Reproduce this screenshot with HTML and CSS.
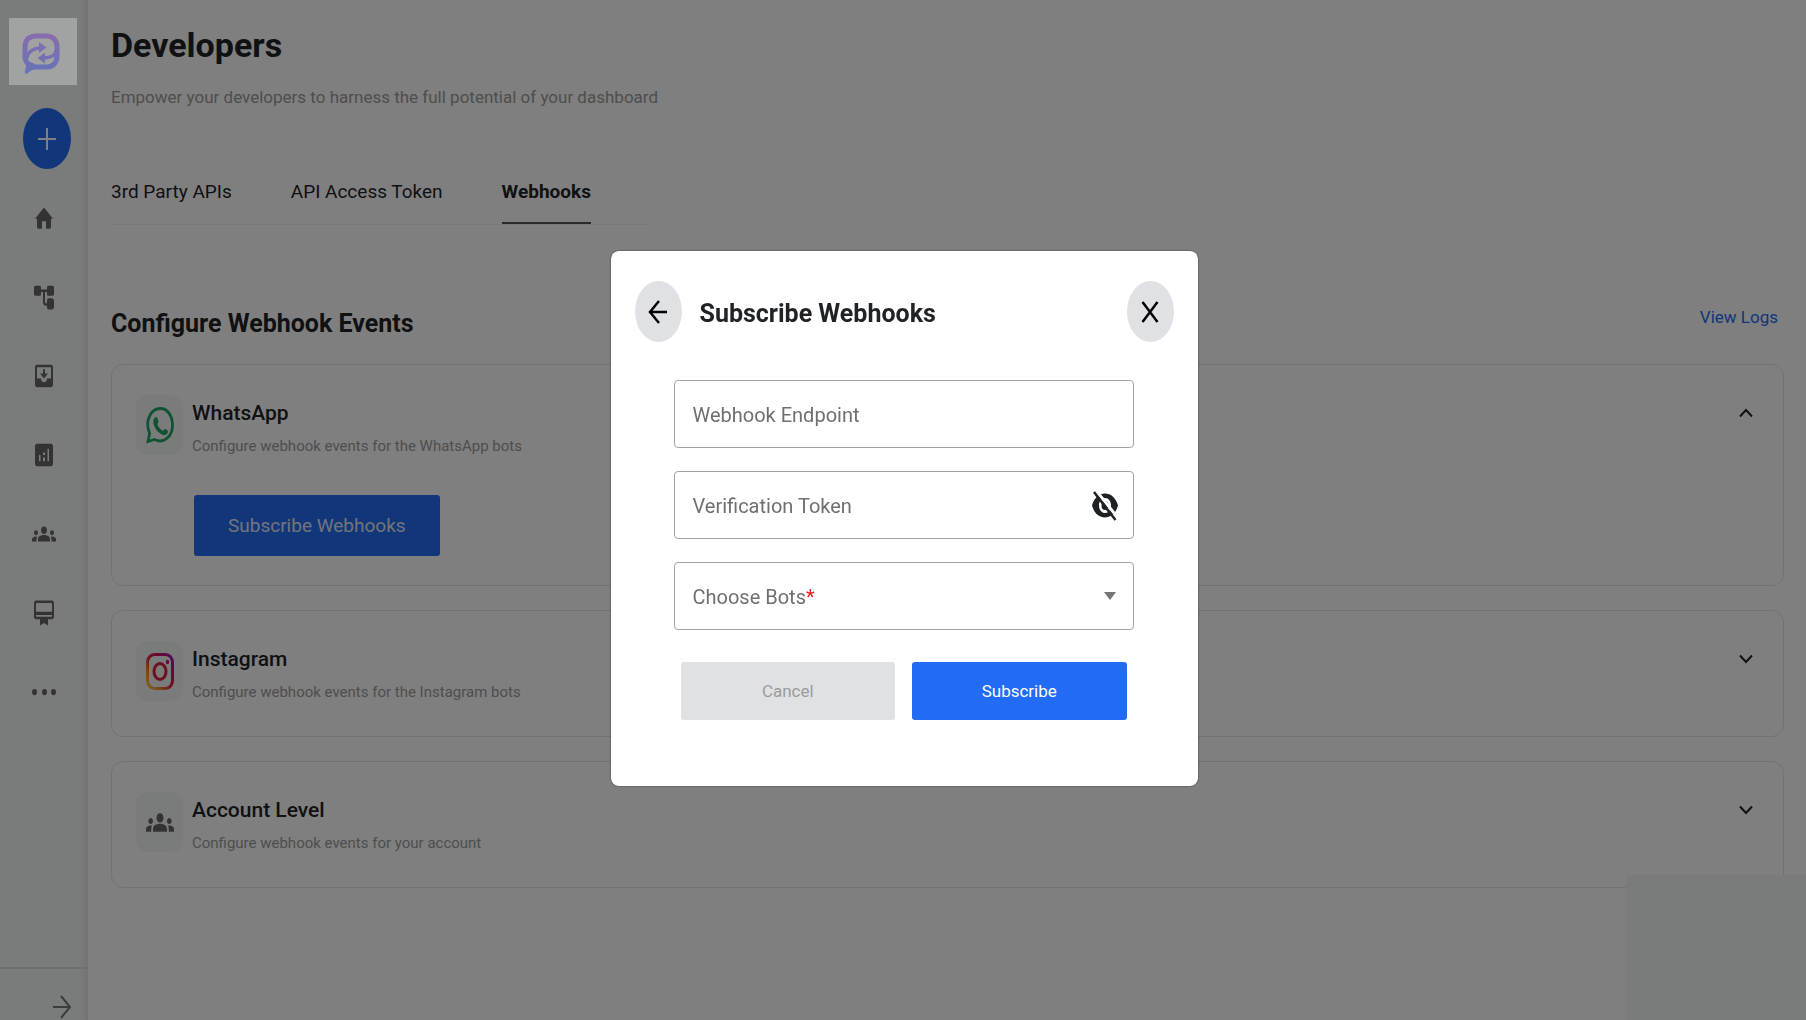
FILE: index.html
```html
<!DOCTYPE html>
<html lang="en">
<head>
<meta charset="utf-8">
<meta name="viewport" content="width=device-width, initial-scale=1">
<title>Developers</title>
<link rel="stylesheet" href="styles.css">
</head>
<body>
<div class="app">
  <nav class="sidebar" aria-label="Main">
    <a class="logo" href="#" aria-label="Dashboard">
      <svg class="logo-mark" viewBox="0 0 38 41" fill="none">
        <defs><linearGradient id="brand" gradientUnits="userSpaceOnUse" x1="0" y1="0" x2="0" y2="40"><stop offset="0" stop-color="#8a6cab"/><stop offset="1" stop-color="#6474b8"/></linearGradient></defs>
        <g stroke="url(#brand)">
          <path stroke-width="5" d="M6 31C4 29 3 26.500 3 23V14C3 7 7 3 14 3h10c7 0 11 4 11 11v9c0 7-4 11-11 11H11"/>
          <path stroke-width="3.500" d="M5 25c1-6 6-10 14-10M34 17c0 5-5 8-13 8"/>
        </g>
        <g fill="url(#brand)">
          <path d="M17 9 24.500 14.500 17 20zM23 19.500 15.500 25l7.500 5.500z"/>
          <path d="M3 27c2 4 1 8 0 11-.5 2 0 3 2 2.500C8 39 9 36.500 13 36.500V31z"/>
        </g>
      </svg>
    </a>
    <button class="add" type="button" aria-label="Create">
      <svg viewBox="0 0 18 22" width="18" height="22"><path d="M9 0v22M0 11h18" stroke="#fff" stroke-width="2"/></svg>
    </button>
    <ul class="nav">
      <li><a href="#" aria-label="Home"><svg viewBox="0 0 24 24" preserveAspectRatio="none"><path d="M12 3.500 3 12.500h2V19c0 1 .5 1.500 1.500 1.500H10v-6h4v6h3.500c1 0 1.500-.5 1.500-1.500v-6.500h2z"/></svg></a></li>
      <li><a href="#" aria-label="Flows"><svg viewBox="0 0 24 24" preserveAspectRatio="none"><path d="M4 3h3.500C8.500 3 9 3.500 9 4.500V6h6V4.500c0-1 .5-1.500 1.500-1.500H20c1 0 2 .5 2 1.500v5c0 1-1 1.500-2 1.500h-3.500c-1 0-1.500-.5-1.500-1.500V8h-2v7.500c0 1 .5 1.500 1.500 1.500h.5v-2c0-1 .5-2 1.500-2H20c1 0 2 1 2 2v5c0 1-1 2-2 2h-3.500c-1 0-1.500-1-1.500-2v-1h-1c-2 0-3-1-3-3V8H9v1.500c0 1-.5 1.500-1.500 1.500H4c-1 0-2-.5-2-1.500v-5C2 3.500 3 3 4 3z"/></svg></a></li>
      <li><a href="#" aria-label="Inbox"><svg viewBox="0 0 24 24" preserveAspectRatio="none"><path fill-rule="evenodd" d="M5 3h14c1.100 0 2 .9 2 2v14c0 1.100-.9 2-2 2H5c-1.100 0-2-.9-2-2V5c0-1.100.9-2 2-2zm0 2v9h4c0 1.700 1.300 3 3 3s3-1.300 3-3h4V5zm6 1.500h2V10h3l-4 4-4-4h3z"/></svg></a></li>
      <li><a href="#" aria-label="Analytics"><svg viewBox="0 0 24 24" preserveAspectRatio="none"><path fill-rule="evenodd" d="M5 3h14c1.100 0 2 .9 2 2v14c0 1.100-.9 2-2 2H5c-1.100 0-2-.9-2-2V5c0-1.100.9-2 2-2zm2 9v5h1.500v-5zm4 2v3h2v-3zm0-4v2h2v-2zm4.500-3v10H17V7z"/></svg></a></li>
      <li><a href="#" aria-label="Audience"><svg viewBox="0 0 24 24" preserveAspectRatio="none"><use href="#groups"/></svg></a></li>
      <li><a href="#" aria-label="Membership"><svg viewBox="0 0 24 24" preserveAspectRatio="none"><path fill-rule="evenodd" d="M20 2H4c-1.100 0-2 .9-2 2v11c0 1.100.9 2 2 2h4v5l4-2 4 2v-5h4c1.100 0 2-.9 2-2V4c0-1.100-.9-2-2-2zm0 13H4v-1.500h16zm0-4H4V4h16z"/></svg></a></li>
      <li><a href="#" aria-label="More"><svg viewBox="0 0 24 24" preserveAspectRatio="none"><circle cx="2.500" cy="12" r="2.500"/><circle cx="12.500" cy="12" r="2.500"/><circle cx="21.500" cy="12" r="2.500"/></svg></a></li>
    </ul>
    <div class="expand">
      <button type="button" aria-label="Expand menu"><svg viewBox="0 0 20 24" width="20" height="24" fill="none" stroke="#767978" stroke-width="2"><path d="M1 12h17M9 1l9 11-9 11"/></svg></button>
    </div>
  </nav>

  <main class="content">
    <h1>Developers</h1>
    <p class="lead">Empower your developers to harness the full potential of your dashboard</p>
    <div class="tabs">
      <a class="tab" href="#">3rd Party APIs</a>
      <a class="tab" href="#">API Access Token</a>
      <a class="tab tab-active" href="#" aria-current="page">Webhooks</a>
    </div>
    <div class="section-head">
      <h2>Configure Webhook Events</h2>
      <a class="logs" href="#">View Logs</a>
    </div>
    <div class="cards">
      <section class="card">
        <div class="card-head">
          <span class="tile"><svg viewBox="0 0 28 37" width="28" height="37"><path fill="none" stroke="#24a464" stroke-width="2.800" d="M2 34.500 3.600 26.500C-1.500 14 4.500 1.500 14.500 1.500c7 0 12 7.500 12 16.500 0 12-9 19-18 14.500z"/><path fill="#24a464" d="M8.500 11c1-1.500 2.500-1.500 3 0l1 3.500c.300 1-1 2-1 3 1.500 3.500 3 5 5.500 6.500l1.500-2c.5-.5 3.500 1.500 3.500 2 0 3-2 4.500-4.500 4C12 26.500 6 19 7.500 12.500z"/></svg></span>
          <div class="card-text"><h3>WhatsApp</h3><p>Configure webhook events for the WhatsApp bots</p></div>
          <button class="toggle" type="button" aria-label="Collapse WhatsApp" aria-expanded="true"><svg viewBox="0 0 14 10"><path d="m1 8.500 6-6.500 6 6.500"/></svg></button>
        </div>
        <button class="btn btn-open" type="button">Subscribe Webhooks</button>
      </section>
      <section class="card">
        <div class="card-head">
          <span class="tile"><svg viewBox="0 0 28 37" width="28" height="37" fill="none"><defs><linearGradient id="insta" x1="0" y1="1" x2="1" y2="0"><stop offset="0" stop-color="#ffc83d"/><stop offset=".25" stop-color="#f58a2c"/><stop offset=".5" stop-color="#e0203f"/><stop offset=".75" stop-color="#d0106a"/><stop offset="1" stop-color="#9a1cc0"/></linearGradient></defs><rect x="1.500" y="1.500" width="25" height="34" rx="7" ry="8" stroke="url(#insta)" stroke-width="3"/><ellipse cx="14" cy="18.500" rx="6" ry="8" stroke="#dc2040" stroke-width="3"/><ellipse cx="21.500" cy="9" rx="1.700" ry="2.200" fill="#c8127c"/></svg></span>
          <div class="card-text"><h3>Instagram</h3><p>Configure webhook events for the Instagram bots</p></div>
          <button class="toggle" type="button" aria-label="Expand Instagram" aria-expanded="false"><svg viewBox="0 0 14 10"><path d="m1 1.500 6 6.500 6-6.500"/></svg></button>
        </div>
      </section>
      <section class="card">
        <div class="card-head">
          <span class="tile"><svg viewBox="0 0 24 24" width="28" height="37" preserveAspectRatio="none" fill="#666"><path id="groups" d="M12 12.750c1.630 0 3.070.390 4.240.9 1.080.480 1.760 1.560 1.760 2.730V18H6v-1.610c0-1.180.680-2.260 1.760-2.730 1.170-.520 2.610-.910 4.240-.910zM4 13c1.100 0 2-.9 2-2s-.9-2-2-2-2 .9-2 2 .9 2 2 2zm1.130 1.100c-.370-.060-.740-.1-1.130-.1-.990 0-1.930.210-2.780.580C.480 14.900 0 15.620 0 16.430V18h4.500v-1.610c0-.830.230-1.610.630-2.290zM20 13c1.100 0 2-.9 2-2s-.9-2-2-2-2 .9-2 2 .9 2 2 2zm4 3.430c0-.810-.480-1.530-1.220-1.850-.850-.370-1.790-.580-2.780-.580-.390 0-.760.040-1.130.1.400.680.630 1.460.630 2.290V18H24zM12 6c1.660 0 3 1.340 3 3s-1.340 3-3 3-3-1.340-3-3 1.340-3 3-3z"/></svg></span>
          <div class="card-text"><h3>Account Level</h3><p>Configure webhook events for your account</p></div>
          <button class="toggle" type="button" aria-label="Expand Account Level" aria-expanded="false"><svg viewBox="0 0 14 10"><path d="m1 1.500 6 6.500 6-6.500"/></svg></button>
        </div>
      </section>
    </div>
  </main>
  <div class="corner-panel"></div>
</div>

<div class="overlay">
  <div class="modal" role="dialog" aria-modal="true" aria-labelledby="modal-title">
    <header class="modal-head">
      <button class="round" type="button" aria-label="Back"><svg viewBox="0 0 20 24" width="20" height="24"><path d="M19 12H2M11 1 2 12l9 11"/></svg></button>
      <h2 id="modal-title">Subscribe Webhooks</h2>
      <button class="round" type="button" aria-label="Close"><svg viewBox="0 0 18 22" width="18" height="22"><path d="m1.500 1 15 20m0-20-15 20"/></svg></button>
    </header>
    <form class="form">
      <div class="field">
        <input id="endpoint" type="text">
        <label for="endpoint">Webhook Endpoint</label>
      </div>
      <div class="field">
        <input id="token" type="password">
        <label for="token">Verification Token</label>
        <button class="reveal" type="button" aria-label="Show token"><svg viewBox="0 0 28 30" width="28" height="30" fill="none"><path fill="#1d2125" fill-rule="evenodd" d="M1 14.500C3 7 8 2.500 14 2.500S25 7 27 14.500C25 22 20 26.500 14 26.500S3 22 1 14.500zM14 7c-3.600 0-6 3.400-6 7.500S10.400 22 14 22s6-3.400 6-7.500S17.600 7 14 7z"/><ellipse cx="14" cy="14.500" rx="3.500" ry="4.500" fill="#1d2125"/><path d="M5.500 0 27 27" stroke="#fff" stroke-width="3"/><path d="M3 1l21.500 28" stroke="#1d2125" stroke-width="2.500"/></svg></button>
      </div>
      <div class="field">
        <select id="bots" required><option value=""></option></select>
        <label for="bots">Choose Bots<span class="required">*</span></label>
        <svg class="caret" viewBox="0 0 12 8" width="12" height="8"><path d="M0 0h12L6 8z" fill="#757575"/></svg>
      </div>
      <div class="actions">
        <button class="btn btn-cancel" type="button">Cancel</button>
        <button class="btn" type="submit">Subscribe</button>
      </div>
    </form>
  </div>
</div>
</body>
</html>
```
FILE: styles.css
```css
* { box-sizing: border-box; }

body {
  margin: 0;
  background: #fff;
  color: #1f2326;
  font-family: Roboto, "Liberation Sans", sans-serif;
}

h1, h2, h3, p, ul { margin: 0; padding: 0; }
a { color: inherit; text-decoration: none; }
svg { display: block; }

button, input, select { font: inherit; margin: 0; }
button { border: 0; padding: 0; background: none; cursor: pointer; }

.app {
  display: flex;
  height: 100vh;
  overflow: hidden;
}

/* Sidebar */
.sidebar {
  display: flex;
  flex-direction: column;
  flex: none;
  width: 88px;
  background: linear-gradient(to left, #e8e6e6, #f4f8f6 8px);
}

.logo {
  position: relative;
  z-index: 3;
  display: flex;
  align-items: center;
  justify-content: center;
  width: 68px;
  height: 67px;
  margin: 18px 0 23px 9px;
  padding: 4px 4px 0 0;
  background: #a1a3a2;
}

.logo-mark { width: 38px; height: 41px; }

.add {
  display: flex;
  align-items: center;
  justify-content: center;
  width: 48px;
  height: 61px;
  margin-left: 23px;
  border-radius: 50%;
  background: #226cf5;
}

.nav {
  display: flex;
  flex-direction: column;
  gap: 49px;
  margin-top: 34px;
  list-style: none;
}

.nav svg {
  width: 24px;
  height: 30px;
  margin-left: 32px;
  fill: #666;
}

.expand {
  display: flex;
  justify-content: flex-end;
  height: 53px;
  margin-top: auto;
  padding: 26px 16px 0 0;
  border-top: 2px solid #dcdfdd;
}

.expand button { align-self: flex-start; }

/* Page */
.content {
  flex: 1;
  min-width: 0;
  padding: 20px 22px 0 23px;
}

h1 { font-size: 34px; line-height: 50px; }

.lead {
  margin-top: 14px;
  color: #9c9c9c;
  font-size: 17px;
  line-height: 26px;
}

.tabs {
  display: inline-flex;
  gap: 59px;
  margin-top: 62px;
  padding-right: 59px;
  border-bottom: 1px solid #f2f2f2;
  font-size: 19px;
  line-height: 40px;
}

.tab { padding-bottom: 10px; }

.tab-active {
  border-bottom: 2px solid #555;
  font-weight: 700;
}

.section-head {
  display: flex;
  justify-content: space-between;
  align-items: flex-start;
  margin-top: 75px;
  padding-right: 6px;
}

h2 { font-size: 25px; line-height: 48px; }

.logs {
  color: #226cf5;
  font-size: 17px;
  line-height: 34px;
}

.cards {
  display: flex;
  flex-direction: column;
  gap: 24px;
  margin-top: 16px;
}

.card {
  padding: 30px 30px 29px 24px;
  border: 1px solid #e3e4e4;
  border-radius: 12px;
}

.card-head {
  display: flex;
  gap: 9px;
  min-height: 66px;
}

.tile {
  display: flex;
  align-items: center;
  justify-content: center;
  flex: none;
  width: 47px;
  height: 60px;
  border-radius: 12px;
  background: #f4f8f6;
}

.card-text { flex: 1; }
h3 { font-size: 21px; font-weight: 500; line-height: 36px; }

.card-text p {
  color: #9c9c9c;
  font-size: 15px;
  line-height: 30px;
}

.toggle { align-self: flex-start; padding: 13px 0; }

.toggle svg {
  width: 14px;
  height: 10px;
  fill: none;
  stroke: #1f2326;
  stroke-width: 2;
}

.btn {
  border-radius: 3px;
  background: #226cf5;
  color: #fff;
  font-size: 17px;
}

.btn-open {
  height: 61px;
  margin: 34px 0 0 58px;
  padding: 0 34px;
  color: #e4e9f5;
  font-size: 19px;
}

.corner-panel {
  position: fixed;
  right: 0;
  bottom: 0;
  width: 180px;
  height: 145px;
  background: #f4f8f6;
}

/* Dialog */
.overlay {
  position: fixed;
  inset: 0;
  z-index: 2;
  display: flex;
  align-items: center;
  justify-content: center;
  padding: 17px 0 0 2px;
  background: rgba(0, 0, 0, 0.5);
}

.modal {
  width: 587px;
  max-width: 100%;
  padding: 30px 24px 66px;
  border-radius: 8px;
  background: #fff;
  box-shadow: 0 0 2px rgba(0, 0, 0, 0.6);
}

.modal-head {
  display: flex;
  align-items: center;
  gap: 18px;
}

.modal-head h2 { flex: 1; padding-top: 4px; }

.round {
  display: flex;
  align-items: center;
  justify-content: center;
  width: 47px;
  height: 61px;
  border-radius: 50%;
  background: #e0e1e5;
}

.round path { fill: none; stroke: #000; stroke-width: 2.5; }

.form {
  display: flex;
  flex-direction: column;
  gap: 23px;
  margin: 38px 40px 0 39px;
}

.field {
  position: relative;
  color: #6f6f6f;
  font-size: 20px;
}

.field input,
.field select {
  display: block;
  width: 100%;
  height: 68px;
  padding: 0 18px;
  border: 1px solid #a3a3a3;
  border-radius: 4px;
  background: #fff;
  appearance: none;
}

.field label {
  position: absolute;
  left: 19px;
  top: 0;
  line-height: 70px;
  pointer-events: none;
}

.required { color: #e02020; }
.reveal { position: absolute; right: 15px; top: 20px; }
.caret { position: absolute; right: 18px; top: 30px; pointer-events: none; }

.actions {
  display: grid;
  grid-template-columns: 1fr 1fr;
  gap: 17px;
  margin: 9px 7px 0;
}

.actions .btn { height: 58px; }
.actions .btn-cancel { background: #e0e1e5; color: #9b9b9b; }
```
